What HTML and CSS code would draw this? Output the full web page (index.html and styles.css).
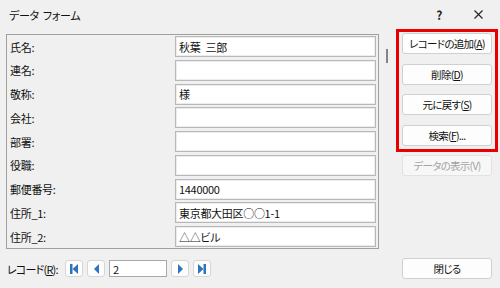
FILE: index.html
```html
<!DOCTYPE html>
<html lang="ja">
<head>
    <meta charset="UTF-8">
    <title>データ フォーム</title>
    <link rel="stylesheet" href="styles.css">
</head>
<body>
    <div class="dialog">
        <div class="titlebar">
            <span class="title">データ&thinsp; フォーム</span>
            <span class="help">?</span>
            <svg class="close-x" width="9" height="9" viewBox="0 0 9 9">
                <path d="M0.5 0.5 L8.5 8.5 M8.5 0.5 L0.5 8.5" stroke="#222" stroke-width="1.1" fill="none"/>
            </svg>
        </div>

        <div class="main">
            <div class="record-panel">
                <div class="label">氏名:</div>
                <div class="field">秋葉&ensp;三郎</div>
                <div class="label">連名:</div>
                <div class="field"></div>
                <div class="label">敬称:</div>
                <div class="field">様</div>
                <div class="label">会社:</div>
                <div class="field"></div>
                <div class="label">部署:</div>
                <div class="field"></div>
                <div class="label">役職:</div>
                <div class="field"></div>
                <div class="label">郵便番号:</div>
                <div class="field">1440000</div>
                <div class="label">住所_1:</div>
                <div class="field">東京都大田区○○1-1</div>
                <div class="label">住所_2:</div>
                <div class="field">△△ビル</div>
            </div>

            <div class="scroll">
                <div class="thumb"></div>
            </div>

            <div class="actions">
                <div class="highlight">
                    <button class="btn">レコードの追加(<u>A</u>)</button>
                    <button class="btn">削除(<u>D</u>)</button>
                    <button class="btn">元に戻す(<u>S</u>)</button>
                    <button class="btn">検索(<u>F</u>)...</button>
                </div>
                <button class="btn btn-disabled" disabled>データの表示(V)</button>
            </div>
        </div>

        <div class="footer">
            <span class="nav-label">レコード(<u>R</u>):</span>
            <div class="nav">
                <button class="nav-btn">
                    <svg width="8" height="10" viewBox="0 0 8 10"><rect x="0" y="0" width="2.5" height="10"/><polygon points="8,0 2.5,5 8,10"/></svg>
                </button>
                <button class="nav-btn">
                    <svg width="5" height="10" viewBox="0 0 5 10"><polygon points="5,0 0,5 5,10"/></svg>
                </button>
                <div class="record-no">2</div>
                <button class="nav-btn">
                    <svg width="5" height="10" viewBox="0 0 5 10"><polygon points="0,0 5,5 0,10"/></svg>
                </button>
                <button class="nav-btn">
                    <svg width="8" height="10" viewBox="0 0 8 10"><polygon points="0,0 5.5,5 0,10"/><rect x="5.5" y="0" width="2.5" height="10"/></svg>
                </button>
            </div>
            <button class="btn close-btn">閉じる</button>
        </div>
    </div>
</body>
</html>
```

FILE: styles.css
```css
* {
    margin: 0;
    padding: 0;
    box-sizing: border-box;
}

body {
    background: #f0f0f0;
    font-family: "Noto Sans CJK JP", "Noto Sans", sans-serif;
    font-size: 11px;
    font-feature-settings: "palt" 1;
    letter-spacing: -0.3px;
    color: #111;
    width: 500px;
    height: 288px;
    overflow: hidden;
}

.titlebar {
    height: 29px;
    display: flex;
    align-items: center;
    padding: 0 17px 0 9px;
}

.title {
    flex: 1;
}

.help {
    font-size: 12px;
    font-weight: bold;
    color: #222;
    margin-right: 32px;
}

.main {
    display: flex;
    align-items: flex-start;
    height: 229px;
    padding-left: 6px;
}

.record-panel {
    margin-top: 5px;
    width: 373px;
    border: 1px solid #a0a0a0;
    padding: 1px 2px 1px 3px;
    display: grid;
    grid-template-columns: 165px 201px;
    grid-auto-rows: 21px;
    row-gap: 2.75px;
    align-items: center;
}

.field {
    height: 21px;
    background: #fff;
    border: 1px solid #b8b8b8;
    box-shadow: inset 0 0 0 1px #ececec;
    padding: 0 3px;
    display: flex;
    align-items: center;
    white-space: nowrap;
}

.scroll {
    width: 17px;
    padding-top: 20px;
}

.thumb {
    width: 2px;
    height: 14px;
    margin-left: 7px;
    background: #858585;
}

.actions {
    width: 102px;
}

.highlight {
    border: 3px solid #e80000;
    padding: 1px 3px 3px;
    display: flex;
    flex-direction: column;
    gap: 9.5px;
}

.btn {
    width: 90px;
    height: 21px;
    padding: 0;
    border: 1px solid #d0d0d0;
    border-radius: 3px;
    background: #fdfdfd;
    font: inherit;
    font-size: 10.5px;
    letter-spacing: -0.7px;
    color: #111;
}

.btn-disabled {
    margin: 3.5px 0 0 6px;
    color: #a3a3a3;
    border-color: #e2e2e2;
    background: #f7f7f7;
}

.footer {
    display: flex;
    align-items: center;
    height: 21px;
    padding: 0 8px 0 7px;
}

.nav-label {
    width: 58px;
    letter-spacing: -0.8px;
}

.nav {
    display: flex;
    align-items: center;
    gap: 4px;
}

.nav-btn {
    width: 18px;
    height: 17px;
    padding: 0;
    border: 1px solid #d6d6d6;
    border-radius: 3px;
    background: #fdfdfd;
    display: flex;
    align-items: center;
    justify-content: center;
    fill: #2f74bd;
}

.record-no {
    width: 58px;
    height: 17px;
    background: #fff;
    border: 1px solid #a9a9a9;
    padding-left: 3px;
    display: flex;
    align-items: center;
}

.close-btn {
    margin-left: auto;
}
```
